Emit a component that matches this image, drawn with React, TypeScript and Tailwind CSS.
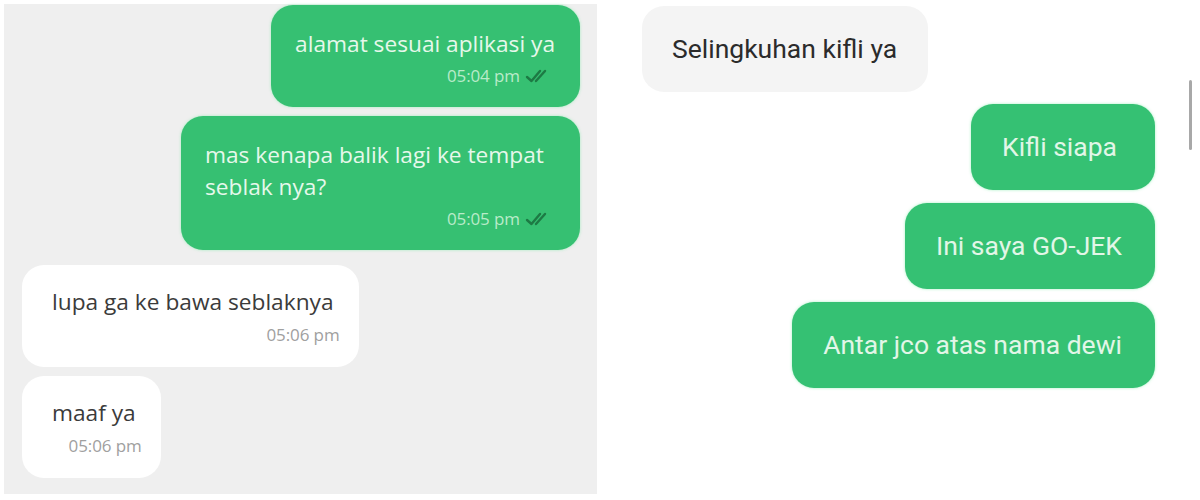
import React from "react";

const leftFont = { fontFamily: '"Open Sans", "Liberation Sans", sans-serif' };
const rightFont = { fontFamily: 'Roboto, "Liberation Sans", sans-serif' };

function DoubleCheck() {
  return (
    <svg width="30" height="14" viewBox="0 0 30 14" fill="none">
      <path d="M2 8 L6.5 12 L15 2" stroke="#1d7a44" strokeWidth="2.4" strokeLinecap="round" strokeLinejoin="round" />
      <path d="M11 12 L20 2" stroke="#1d7a44" strokeWidth="2.4" strokeLinecap="round" />
    </svg>
  );
}

function SentBubble({ text, time, className }: { text: React.ReactNode; time: string; className?: string }) {
  return (
    <div
      className={
        "self-end bg-[#36c072] rounded-[22px] pl-[24px] pr-[25px] pt-[23px] pb-[21px] shadow-[0_0_3px_rgba(130,235,170,0.7)] " +
        (className ?? "")
      }
    >
      <p className="text-[22.7px] leading-[32px] text-[#e6f8eb]">{text}</p>
      <div className="mt-[6px] h-[20px] flex items-center justify-end gap-[5px]">
        <span className="text-[17px] tracking-[-0.1px] text-[#b9ebc9]">{time}</span>
        <DoubleCheck />
      </div>
    </div>
  );
}

function ReceivedBubble({ text, time, className }: { text: string; time: string; className?: string }) {
  return (
    <div className={"self-start bg-white rounded-[22px] pl-[30px] pr-[19px] pt-[21px] pb-[22px] " + (className ?? "")}>
      <p className="pr-[6px] text-[22.7px] leading-[32px] text-[#3b3b3b]">{text}</p>
      <div className="mt-[7px] h-[20px] flex items-center justify-end">
        <span className="text-[17px] tracking-[-0.1px] text-[#a0a0a0]">{time}</span>
      </div>
    </div>
  );
}

function GreenPill({ text, className }: { text: string; className?: string }) {
  return (
    <div
      className={
        "self-end h-[86px] flex items-center pl-[31px] pr-[33px] bg-[#35c173] rounded-[22px] shadow-[0_0_3px_rgba(130,235,170,0.7)] " +
        (className ?? "")
      }
    >
      <span className="text-[26.5px] text-[#e2f6e7]">{text}</span>
    </div>
  );
}

export default function App() {
  return (
    <div className="w-[1200px] h-[500px] bg-white flex">
      <div
        className="ml-[4px] mt-[4px] w-[593px] h-[490px] bg-[#efefef] flex flex-col pl-[18px] pr-[17px] pt-[1px]"
        style={leftFont}
      >
        <SentBubble text="alamat sesuai aplikasi ya" time="05:04 pm" />
        <SentBubble
          className="mt-[9px] w-[399px]"
          text="mas kenapa balik lagi ke tempat seblak nya?"
          time="05:05 pm"
        />
        <ReceivedBubble className="mt-[15px]" text="lupa ga ke bawa seblaknya" time="05:06 pm" />
        <ReceivedBubble className="mt-[9px]" text="maaf ya" time="05:06 pm" />
      </div>

      <div className="relative flex-1 flex flex-col pl-[45px] pr-[45px] pt-[6px]" style={rightFont}>
        <div className="self-start h-[86px] flex items-center pl-[30px] pr-[31px] bg-[#f4f4f4] rounded-[22px]">
          <span className="text-[26.5px] text-[#2b2b2b]">Selingkuhan kifli ya</span>
        </div>
        <GreenPill className="mt-[12px] pr-[38px]" text="Kifli siapa" />
        <GreenPill className="mt-[13px]" text="Ini saya GO-JEK" />
        <GreenPill className="mt-[13px]" text="Antar jco atas nama dewi" />

        <div className="absolute left-[592px] top-[80px] w-[3px] h-[70px] rounded-full bg-[#a8a8a8]" />
      </div>
    </div>
  );
}
